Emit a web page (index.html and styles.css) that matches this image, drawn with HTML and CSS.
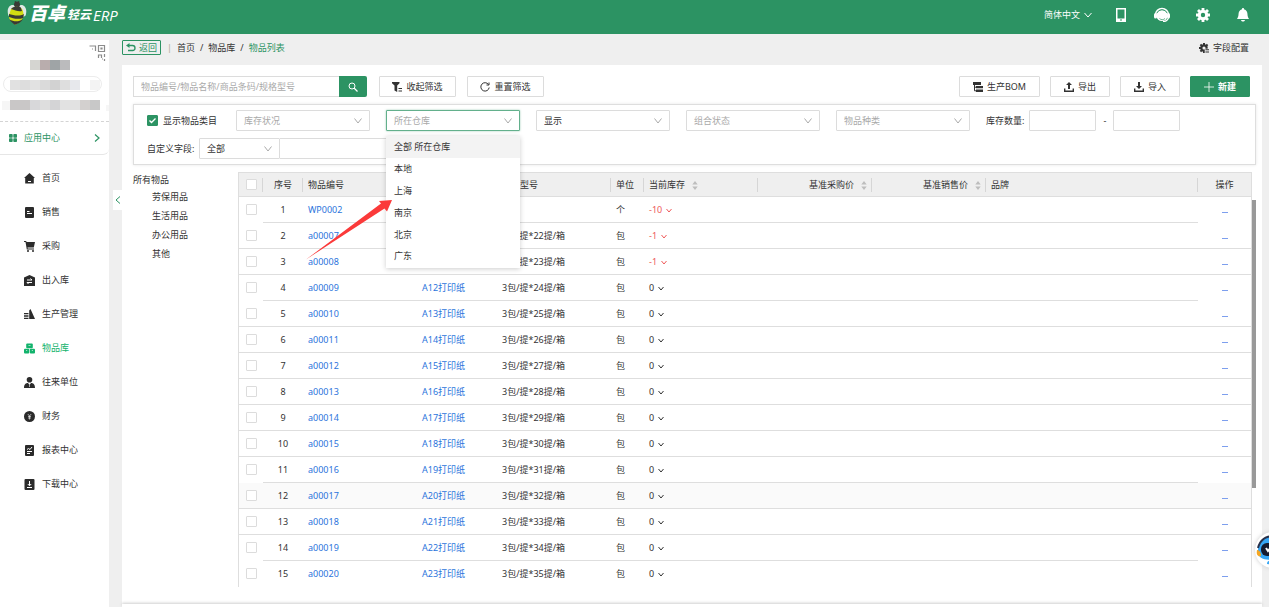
FILE: index.html
```html
<!DOCTYPE html>
<html lang="zh-CN">
<head>
<meta charset="utf-8">
<title>物品列表</title>
<link rel="stylesheet" href="styles.css">
</head>
<body>
<header class="topbar">
  <div class="logo">
    <svg class="bee" viewBox="0 0 20 25" width="20" height="25">
      <path d="M1 13C-.5 6 4 2 9 5L7 14C4 16 1 16 1 13zM19 13C20.500 6 16 2 11 5L13 14C16 16 19 16 19 13z" fill="#dfe9e4"/>
      <circle cx="10" cy="3.500" r="3" fill="#3a3a35"/><path d="M8 0l1 2M12 0l-1 2" stroke="#3a3a35"/>
      <path d="M4 8C7 5 13 5 15 8C18 13 17 20 8 24C7 21 1 20 2 14z" fill="#d3dc12"/>
      <path d="M4 8C7 5 13 5 14 7L15 10C11 11 8 9 4 8zM2 13C6 14 12 16 17 13L16 17C11 19 5 17 2 16zM2.500 18.500C7 21 12 21 16 18C14 22 9 23 8 24C6 22 4 21 2.500 18.500z" fill="#3a3a35"/>
    </svg>
    <span class="logo-big">百卓</span><span class="logo-mid">轻云</span><span class="logo-erp">ERP</span>
  </div>
  <nav class="top-tools">
    <button class="lang">简体中文 <svg width="8" height="6" viewBox="0 0 8 6"><path d="M.500 1L4 5L7.500 1" fill="none" stroke="#fff"/></svg></button>
    <button class="tool" aria-label="手机"><svg width="10" height="14" viewBox="0 0 10 14"><path d="M0 0h10v14H0zM1.500 1.500v9h7v-9z" fill="#fff" fill-rule="evenodd"/><path d="M4 12h2" stroke="#2c9363"/></svg></button>
    <button class="tool" aria-label="客服"><svg width="16" height="16" viewBox="0 0 16 16"><path d="M1.500 8a6.500 6.500 0 0 1 13 0" fill="none" stroke="#fff" stroke-width="1.500"/><circle cx="8" cy="8.500" r="5.600" fill="#fff"/><rect y="6" width="3" height="5.500" rx="1.500" fill="#fff"/><rect x="13" y="6" width="3" height="5.500" rx="1.500" fill="#fff"/><path d="M3 6a5.500 5.500 0 0 1 10 0M5.500 11.500c1.500 1.500 4 1.500 5.500 0" fill="none" stroke="#2c9363" stroke-width=".7"/><path d="M9 14.500c3 0 4.500-1 5.500-3.500" fill="none" stroke="#fff" stroke-width="1.200"/></svg></button>
    <button class="tool" aria-label="设置"><svg width="14" height="14" viewBox="0 0 14 14"><circle cx="7" cy="7" r="3.700" fill="none" stroke="#fff" stroke-width="3"/><path d="M7 0v3M7 11v3M0 7h3M11 7h3M2 2l2 2M10 10l2 2M12 2l-2 2M4 10l-2 2" stroke="#fff" stroke-width="2.800"/></svg></button>
    <button class="tool" aria-label="通知"><svg width="14" height="14" viewBox="0 0 14 14"><path d="M7 0c.8 0 1 .5 1 1.200C10.500 2 11.500 4 11.500 6.500c0 2 .8 3 1.500 4.500H1c.7-1.500 1.500-2.500 1.500-4.500C2.500 4 3.500 2 6 1.200C6 .5 6.200 0 7 0zM5 12h4c-.5 2-3.500 2-4 0z" fill="#fff"/></svg></button>
  </nav>
</header>

<div class="body">
  <aside class="sidebar">
    <div class="account">
      <svg class="account-art" viewBox="0 0 109 81" width="109" height="81">
        <path d="M89.500 6h6v5M92 9h1M98.500 5.500h6v6h-6zM101 8h1v1h-1zM98.500 18v-3h3v3M104.500 14v3M104.500 19v2M102 19h1" fill="none" stroke="#8b8b8b" stroke-width="1.200"/>
        <path d="M30 20h10v10H30z" fill="#d5d5d1"/><path d="M40 20h10v10H40z" fill="#b9adad"/><path d="M50 20h10v10H50z" fill="#9fa4a6"/><path d="M60 20h10v10H60z" fill="#bbbbbd"/>
        <rect x="3.500" y="36.500" width="98" height="15" rx="7.500" fill="#fff" stroke="#ececec"/>
        <path d="M10 40h10v10H10z" fill="#e1e1e1"/><path d="M20 40h10v10H20z" fill="#ddd"/><path d="M30 40h10v10H30z" fill="#e2e2e2"/><path d="M40 40h10v10H40z" fill="#dadada"/><path d="M50 40h10v10H50z" fill="#d2d2d2"/><path d="M60 40h10v10H60z" fill="#dedede"/><path d="M70 40h10v10H70z" fill="#e7e8ec"/><path d="M90 40h10v10H90z" fill="#f3f3f3"/>
        <path d="M2 61h8v9H2zM106 65h3v6h-3z" fill="#f6f6f6"/>
        <path d="M10 60h20v10H10z" fill="#c9c7c7"/><path d="M30 60h10v10H30z" fill="#d8d8da"/><path d="M40 60h10v10H40z" fill="#dedede"/><path d="M50 60h10v10H50z" fill="#d4d4d6"/><path d="M60 60h20v10H60z" fill="#e2e2e2"/><path d="M80 60h10v10H80z" fill="#d3d0cf"/><path d="M90 60h10v10H90z" fill="#c8c8c8"/>
      </svg>
      <a class="apps" href="#"><svg width="8" height="8" viewBox="0 0 8 8"><rect width="3.700" height="3.700" rx=".8"/><rect x="4.300" width="3.700" height="3.700" rx=".8"/><rect y="4.300" width="3.700" height="3.700" rx=".8"/><rect x="4.300" y="4.300" width="3.700" height="3.700" rx=".8"/></svg><span>应用中心</span><svg class="apps-go" width="6" height="8" viewBox="0 0 6 8"><path d="M1 .5L5 4L1 7.500" fill="none" stroke="#2c9363" stroke-width="1.200"/></svg></a>
    </div>
    <nav class="menu">
      <a href="#"><svg viewBox="0 0 11 11"><path d="M5.500 0L11 5H9.800v5.500H1.200V5H0z"/><path class="cut" d="M4 8.500h3"/></svg>首页</a>
      <a href="#"><svg viewBox="0 0 11 11"><rect x="1" width="9" height="11" rx="1"/><path class="cut" d="M3 4.500h2.500M3 6.500h5"/></svg>销售</a>
      <a href="#"><svg viewBox="0 0 11 11"><path d="M0 0h2.200l.3 1H11L9.800 6.500H3.500l.2 1H10v1H2.800L1.500 1H0z"/><circle cx="4" cy="10" r="1"/><circle cx="9" cy="10" r="1"/></svg>采购</a>
      <a href="#"><svg viewBox="0 0 11 11"><path d="M5.500 0L11 2.500V11H0V2.500z"/><path class="cut" d="M3 5h5L6.500 3.500M8 7.500H3L4.500 9"/></svg>出入库</a>
      <a href="#"><svg viewBox="0 0 11 11"><path d="M5.200 10V1.500L6.500 0L11 10zM0 4h4.500v1.300H0zM0 6.300h4.500v1.500H0zM0 8.800h4.500V10H0z"/></svg>生产管理</a>
      <a class="on" href="#"><svg viewBox="0 0 11 11"><rect x="2.200" y=".5" width="6.600" height="4.800" rx="1"/><rect y="5.800" width="5.200" height="4.700" rx="1"/><rect x="5.800" y="5.800" width="5.200" height="4.700" rx="1"/><path class="thin" d="M4.500 2.500h2M2 7.500h1.200M7.800 7.500H9"/></svg>物品库</a>
      <a href="#"><svg viewBox="0 0 11 11"><circle cx="5.500" cy="2.800" r="2.800"/><path d="M0 11C0 7 2 6 4 6l1.500 2L7 6c2 0 4 1 4 5z"/><path class="thin" d="M5.500 8v2"/></svg>往来单位</a>
      <a href="#"><svg viewBox="0 0 11 11"><circle cx="5.500" cy="5.500" r="5.500"/><path class="thin" d="M3.800 3L5.500 5L7.200 3M5.500 5v3.500M4 5.500h3M4 7h3"/></svg>财务</a>
      <a href="#"><svg viewBox="0 0 11 11"><rect x="1" width="9" height="11" rx="1"/><path class="cut" d="M3 4.500l1.500-1L6 4.500L8 2M3 6.500h5M3 8.500h3"/></svg>报表中心</a>
      <a href="#"><svg viewBox="0 0 11 11"><rect x=".5" width="10" height="11" rx="1"/><path class="cut" d="M5.500 2v4.500M3.800 5L5.500 6.800L7.200 5M3 8.500h5"/></svg>下载中心</a>
    </nav>
  </aside>

  <main class="main">
    <button class="collapse" aria-label="收起"><svg width="6" height="8" viewBox="0 0 6 8"><path d="M5 .5L1 4L5 7.500" fill="none" stroke="#2c9363"/></svg></button>
    <div class="crumbs">
      <button class="back"><svg width="10" height="9" viewBox="0 0 10 9"><path d="M3.500 0v5L0 2.500z" fill="#2c9363"/><path d="M2 2.500h4.500a2.500 2.500 0 0 1 0 5H2" fill="none" stroke="#2c9363" stroke-width="1.300"/></svg>返回</button>
      <span class="bar">|</span><a href="#">首页</a><span>/</span><a href="#">物品库</a><span>/</span><a class="here" href="#">物品列表</a>
      <button class="fields"><svg width="10" height="10" viewBox="0 0 14 14"><circle cx="7" cy="7" r="3.700" fill="none" stroke="#333" stroke-width="3"/><path d="M7 0v3M7 11v3M0 7h3M2 2l2 2M12 2l-2 2M4 10l-2 2" stroke="#333" stroke-width="2.800"/><path d="M8 8h6v6H8z" fill="#efefef"/><path d="M9 9.500h5M9 12.500h5" stroke="#333" stroke-width="1.500"/></svg>字段配置</button>
    </div>

    <section class="panel">
      <div class="toolbar">
        <form class="search"><input type="text" aria-label="搜索" placeholder="物品编号/物品名称/商品条码/规格型号"><button type="button" aria-label="查询"><svg width="10" height="10" viewBox="0 0 10 10"><circle cx="4" cy="4" r="3" fill="none" stroke="#fff"/><path d="M6 6l3.500 3.500" stroke="#fff" stroke-width="1.300"/></svg></button></form>
        <button class="btn filter-btn"><svg width="10" height="10" viewBox="0 0 10 10"><path d="M0 0h7.500v1.200L5.200 3.500V10L2.500 8.500v-5L0 1.200z" fill="#333"/><path d="M6.500 6.500H10M6.500 9H10" stroke="#333"/></svg>收起筛选</button>
        <button class="btn filter-btn"><svg width="10" height="10" viewBox="0 0 10 10"><path d="M8.500 2.500A4.200 4.200 0 1 0 9.200 5.500M9 .5v2.500H6.500" fill="none" stroke="#333"/></svg>重置筛选</button>
        <div class="actions">
          <button class="btn bom"><svg width="10" height="10" viewBox="0 0 10 10"><path d="M0 0h8v3H0zM3 4h7v2.300H3zM3 7.500h7V10H3z" fill="#333"/><path d="M1.500 3v5.800H4M1.500 5.200H4" fill="none" stroke="#333"/></svg>生产BOM</button>
          <button class="btn io"><svg width="10" height="10" viewBox="0 0 10 10"><path d="M5 0l3 3H6v4H4V3H2z" fill="#333"/><path d="M.7 6.500v2.800h8.600V6.500" fill="none" stroke="#333" stroke-width="1.400"/></svg>导出</button>
          <button class="btn io"><svg width="10" height="10" viewBox="0 0 10 10"><path d="M5 7L2 4h2V0h2v4h2z" fill="#333"/><path d="M.7 6.500v2.800h8.600V6.500" fill="none" stroke="#333" stroke-width="1.400"/></svg>导入</button>
          <button class="btn new"><svg width="10" height="10" viewBox="0 0 10 10"><path d="M5 0v10M0 5h10" stroke="#fff" stroke-width=".8"/></svg>新建</button>
        </div>
      </div>

      <div class="filters">
        <div class="filter-row">
          <label class="check"><input class="tick" type="checkbox" checked>显示物品类目</label>
          <select class="sel" aria-label="库存状况"><option>库存状况</option></select>
          <div class="dropdown">
            <select class="sel open" aria-label="所在仓库"><option>所在仓库</option></select>
            <ul class="options"><li class="hot">全部 所在仓库</li><li>本地</li><li>上海</li><li>南京</li><li>北京</li><li>广东</li></ul>
          </div>
          <select class="sel dark" aria-label="显示"><option>显示</option></select>
          <select class="sel" aria-label="组合状态"><option>组合状态</option></select>
          <select class="sel" aria-label="物品种类"><option>物品种类</option></select>
          <label class="qty" for="qmin">库存数量:</label>
          <input class="num" id="qmin" type="text"><span class="dash">-</span><input class="num" type="text" aria-label="最大库存数量">
        </div>
        <div class="filter-row custom">
          <label for="cf">自定义字段:</label>
          <select class="sel dark short" id="cf"><option>全部</option></select><input class="custom-val" type="text" aria-label="自定义字段值">
        </div>
      </div>

      <div class="content">
        <div class="tree"><p>所有物品</p><ul><li>劳保用品</li><li>生活用品</li><li>办公用品</li><li>其他</li></ul></div>
        <table class="grid">
          <colgroup><col class="c-check"><col class="c-no"><col class="c-wide"><col class="c-name"><col class="c-wide"><col class="c-unit"><col class="c-wide"><col class="c-wide"><col class="c-wide"><col><col class="c-op"></colgroup>
          <thead><tr>
            <th class="mid"><input class="tick" type="checkbox" aria-label="全选"></th><th class="mid">序号</th><th>物品编号</th><th>物品名称</th><th>规格型号</th><th>单位</th>
            <th>当前库存<svg class="sort" viewBox="0 0 6 10"><path d="M3 0l3 4H0zM3 10L0 6h6z"/></svg></th>
            <th class="right">基准采购价<svg class="sort" viewBox="0 0 6 10"><path d="M3 0l3 4H0zM3 10L0 6h6z"/></svg></th>
            <th class="right">基准销售价<svg class="sort" viewBox="0 0 6 10"><path d="M3 0l3 4H0zM3 10L0 6h6z"/></svg></th>
            <th>品牌</th><th class="mid">操作</th>
          </tr></thead>
          <tbody id="rows"></tbody>
        </table>
        <div class="scroll"></div>
      </div>
      <div class="pager"></div>
    </section>
  </main>
</div>

<svg class="pointer" width="88" height="62" viewBox="0 0 88 62"><path d="M1 60.500L76 4.500L74 2L87 1L82 12.500L79.500 9.500z" fill="#fb3a3a"/></svg>
<button class="robot" aria-label="助手"><svg width="38" height="38" viewBox="0 0 38 38"><circle cx="19" cy="19" r="18" fill="#fff"/><path d="M4 22C3 12 10 6 19 5h12v25H12C8 29 5 26 4 22z" fill="#36a6f5"/><path d="M4 17C6 9 12 5 20 5" fill="none" stroke="#27304a" stroke-width="2"/><path d="M3 19c2 0 4 2 4 6c-3 1-5-1-4-6z" fill="#f5a623"/><rect x="7" y="12" width="24" height="13" rx="6" fill="#151a2e"/><path d="M12 17l2 3l3-4" fill="none" stroke="#fff" stroke-width="2"/><path d="M5 25.500C8 28 12 29 20 29v3H10z" fill="#fff"/><path d="M13 33c0-3 2-4 7-4v5z" fill="#36a6f5"/></svg></button>
<script src="script.js"></script>
</body>
</html>
```

FILE: styles.css
```css
* { box-sizing: border-box; }
body {
  margin: 0;
  height: 100vh;
  display: flex;
  flex-direction: column;
  overflow: hidden;
  position: relative;
  background: #efefef;
  color: #333;
  font: 9px/14px "Noto Sans", "Noto Sans CJK SC", sans-serif;
}
button, input, select { font: inherit; color: inherit; margin: 0; padding: 0; border: 0; background: none; }
a { color: inherit; text-decoration: none; }
ul { list-style: none; margin: 0; padding: 0; }
p { margin: 0; }
svg { flex: none; display: block; }

.topbar { flex: none; height: 34px; padding: 0 19px 0 7px; display: flex; align-items: flex-start; justify-content: space-between; background: #2c9363; color: #fff; }
.logo { display: flex; align-items: center; height: 26px; font-style: italic; }
.bee { margin-right: 2px; }
.logo-big { font-size: 18px; font-weight: 900; line-height: 26px; }
.logo-mid { font-size: 12px; font-weight: 700; margin: 3px 0 0 2px; }
.logo-erp { font: italic 15px/18px "Open Sans", sans-serif; margin: 3px 0 0 2px; }
.top-tools { display: flex; align-items: center; height: 30px; }
.lang { display: flex; align-items: center; gap: 4px; margin-right: 8px; }
.tool { width: 41px; display: flex; justify-content: center; }
.tool:last-child { width: 14px; margin-left: 13px; }

.body { flex: 1; min-height: 0; display: flex; }
.sidebar { flex: none; width: 109px; margin-top: 6px; background: #fff; }
.account { border-bottom: 1px solid #e6e6e6; border-radius: 0 0 6px 0; }
.apps { height: 33px; padding: 0 9px; display: flex; align-items: center; gap: 7px; border-top: 1px dashed #d4d4d4; color: #2c9363; fill: #2c9363; }
.apps-go { margin-left: auto; }
.menu { padding-top: 6px; }
.menu a { height: 34px; padding-left: 24px; display: flex; align-items: center; gap: 7px; }
.menu svg { width: 11px; height: 11px; fill: #2b2b2b; }
.menu .cut { fill: none; stroke: #fff; stroke-width: 1; }
.menu .thin { fill: none; stroke: #fff; stroke-width: .6; }
.menu .on { color: #12b36c; }
.menu .on svg { fill: #12b36c; }

.main { flex: 1; min-width: 0; position: relative; padding: 0 7px 0 13px; display: flex; flex-direction: column; }
.collapse { position: absolute; left: 4px; top: 156px; width: 10px; height: 20px; display: flex; align-items: center; justify-content: center; background: #fff; }
.crumbs { flex: none; height: 31px; padding: 0 13px 4px 0; display: flex; align-items: center; gap: 5px; }
.back { height: 15px; width: 39px; margin-right: 1px; display: flex; align-items: center; justify-content: center; gap: 3px; border: 1px solid #2c9363; border-radius: 1px; color: #2c9363; }
.bar { color: #b3a997; }
.here { color: #2c9363; }
.fields { margin-left: auto; display: flex; align-items: center; gap: 4px; }

.panel { flex: 1; min-height: 0; display: flex; flex-direction: column; padding: 11px 6px 0 11px; background: #fff; }
.toolbar { flex: none; display: flex; height: 21px; margin-bottom: 7px; padding-right: 6px; }
.search { display: flex; margin-right: 12px; }
.search input { width: 206px; padding: 0 7px; border: 1px solid #dcdcdc; border-right: 0; }
.search input::placeholder { color: #a9a9a9; }
.search button { width: 28px; display: flex; align-items: center; justify-content: center; background: #2c9363; border-radius: 0 2px 2px 0; }
.btn { display: flex; align-items: center; justify-content: center; gap: 4px; border: 1px solid #dcdcdc; border-radius: 1px; background: #fff; }
.filter-btn { width: 77px; margin-right: 11px; }
.actions { margin-left: auto; display: flex; gap: 10px; }
.bom { width: 81px; }
.io { width: 60px; }
.new { width: 60px; background: #2c9363; border-color: #2c9363; color: #fff; font-weight: 700; }

.filters { flex: none; padding: 5px 13px; display: flex; flex-direction: column; gap: 7px; border: 1px solid #dedede; box-shadow: 0 0 3px #e6e6e6; }
.filter-row { display: flex; align-items: center; height: 21px; gap: 16px; }
.check { display: flex; align-items: center; gap: 5px; width: 73px; white-space: nowrap; }
.tick { appearance: none; width: 11px; height: 11px; flex: none; display: block; border: 1px solid #dcdcdc; border-radius: 1px; background: #fff; }
.tick:checked { border-color: #2c9363; background: #2c9363 url("data:image/svg+xml,%3Csvg xmlns='http://www.w3.org/2000/svg' viewBox='0 0 9 9'%3E%3Cpath d='M1.500 4.500l2 2l4-4' fill='none' stroke='white' stroke-width='1.400'/%3E%3C/svg%3E") center / 9px 9px no-repeat; }
.sel { appearance: none; width: 134px; height: 21px; padding: 0 7px; border: 1px solid #dcdcdc; border-radius: 1px; color: #a9a9a9; background: #fff url("data:image/svg+xml,%3Csvg xmlns='http://www.w3.org/2000/svg' viewBox='0 0 8 6'%3E%3Cpath d='M.5 .5L4 5L7.500 .5' fill='none' stroke='%23aaa'/%3E%3C/svg%3E") right 7px center / 8px 6px no-repeat; }
.sel.dark { color: #333; }
.sel.open { border-color: #63b08c; box-shadow: 0 0 2px #2c936388; }
.dropdown { position: relative; z-index: 2; }
.dropdown .sel { display: block; }
.options { position: absolute; left: 0; top: 26px; width: 100%; padding-bottom: 2px; background: #fff; box-shadow: 0 1px 5px #0003; }
.options li { height: 22px; padding: 0 8px; line-height: 22px; }
.options .hot { background: #f3f3f3; }
.options li:last-child { height: 20px; line-height: 20px; }
.qty { margin-right: -11px; }
.num { width: 67px; height: 21px; padding: 0 6px; border: 1px solid #dcdcdc; border-radius: 1px; }
.dash { margin: 0 -9px; }
.custom { gap: 0; }
.custom label { width: 52px; white-space: nowrap; }
.short { width: 81px; }
.custom-val { width: 134px; height: 21px; padding: 0 6px; border: 1px solid #dcdcdc; border-left: 0; }

.content { flex: 1; min-height: 0; display: flex; align-items: flex-start; margin-top: 7px; }
.tree { flex: none; width: 105px; padding-top: 1px; }
.tree p { line-height: 14px; }
.tree li { line-height: 19px; padding-left: 19px; }
.grid { flex: 1; min-width: 0; width: 100%; table-layout: fixed; border-collapse: separate; border-spacing: 0; border-left: 1px solid #dedede; border-right: 1px solid #dedede; }
.c-check { width: 24px; }
.c-no { width: 40px; }
.c-wide { width: 114px; }
.c-name { width: 80px; }
.c-unit { width: 33px; }
.c-op { width: 53px; }
.grid th, .grid td { padding: 0 5px; text-align: left; font-weight: 400; white-space: nowrap; border-bottom: 1px solid #dedede; }
.grid th { height: 25px; border-top: 1px solid #dedede; background: linear-gradient(#d6d6d6, #d6d6d6) right center / 1px 14px no-repeat #efefef; }
.grid th:last-child { background-image: none; }
.grid td { height: 26px; }
.grid .mid { text-align: center; }
.grid .right { text-align: right; }
.grid .tick { margin: 0 auto; }
.grid a { color: #2b74dc; }
.grid .part td:first-child, .grid .part td:last-child { border-bottom-color: transparent; }
.grid tbody tr:last-child td { border-bottom-color: transparent; }
.grid .hover td { background: #fafafa; }
.sort { display: inline-block; width: 6px; height: 9px; margin-left: 7px; vertical-align: -2px; fill: #bdbdbd; }
.caret { display: inline-block; width: 6px; height: 5px; margin-left: 4px; fill: none; stroke: currentColor; }
.minus { color: #ee5a5a; }
.grid .more { display: block; width: 6px; height: 1px; margin: 5px auto 0; background: #7d9fee; }
.scroll { flex: none; width: 4px; height: 288px; margin-top: 28px; background: #999; }
.pager { flex: none; height: 3px; margin: 0 -6px 0 -11px; background: #fff; box-shadow: 0 -1px 3px #ccc; }

.pointer { position: absolute; left: 305px; top: 199px; z-index: 5; }
.robot { position: absolute; right: -23px; top: 531px; z-index: 5; filter: drop-shadow(0 0 2px #ccc); }
```

FILE: script.js
```javascript
const stock = [-10, -1, -1];
const partial = [1, 4, 11, 14];
const body = document.getElementById('rows');
for (let n = 1; n <= 15; n++) {
  const code = n === 1 ? 'WP0002' : 'a' + String(n + 5).padStart(5, '0');
  const name = n === 1 ? '' : `A${n + 8}打印纸`;
  const spec = n === 1 ? '' : `3包/提*${n + 20}提/箱`;
  const qty = stock[n - 1] || 0;
  const row = document.createElement('tr');
  if (partial.includes(n)) row.classList.add('part');
  if (n === 12) row.classList.add('hover');
  row.innerHTML = `<td class="mid"><input class="tick" type="checkbox" aria-label="选择 ${code}"></td>
    <td class="mid">${n}</td><td><a href="#">${code}</a></td><td><a href="#">${name}</a></td><td>${spec}</td>
    <td>${n === 1 ? '个' : '包'}</td>
    <td class="${qty < 0 ? 'minus' : ''}">${qty}<svg class="caret" viewBox="0 0 6 5"><path d="M.5 1L3 4L5.500 1"/></svg></td>
    <td></td><td></td><td></td><td class="mid"><a class="more" href="#" aria-label="更多"></a></td>`;
  body.append(row);
}
```
